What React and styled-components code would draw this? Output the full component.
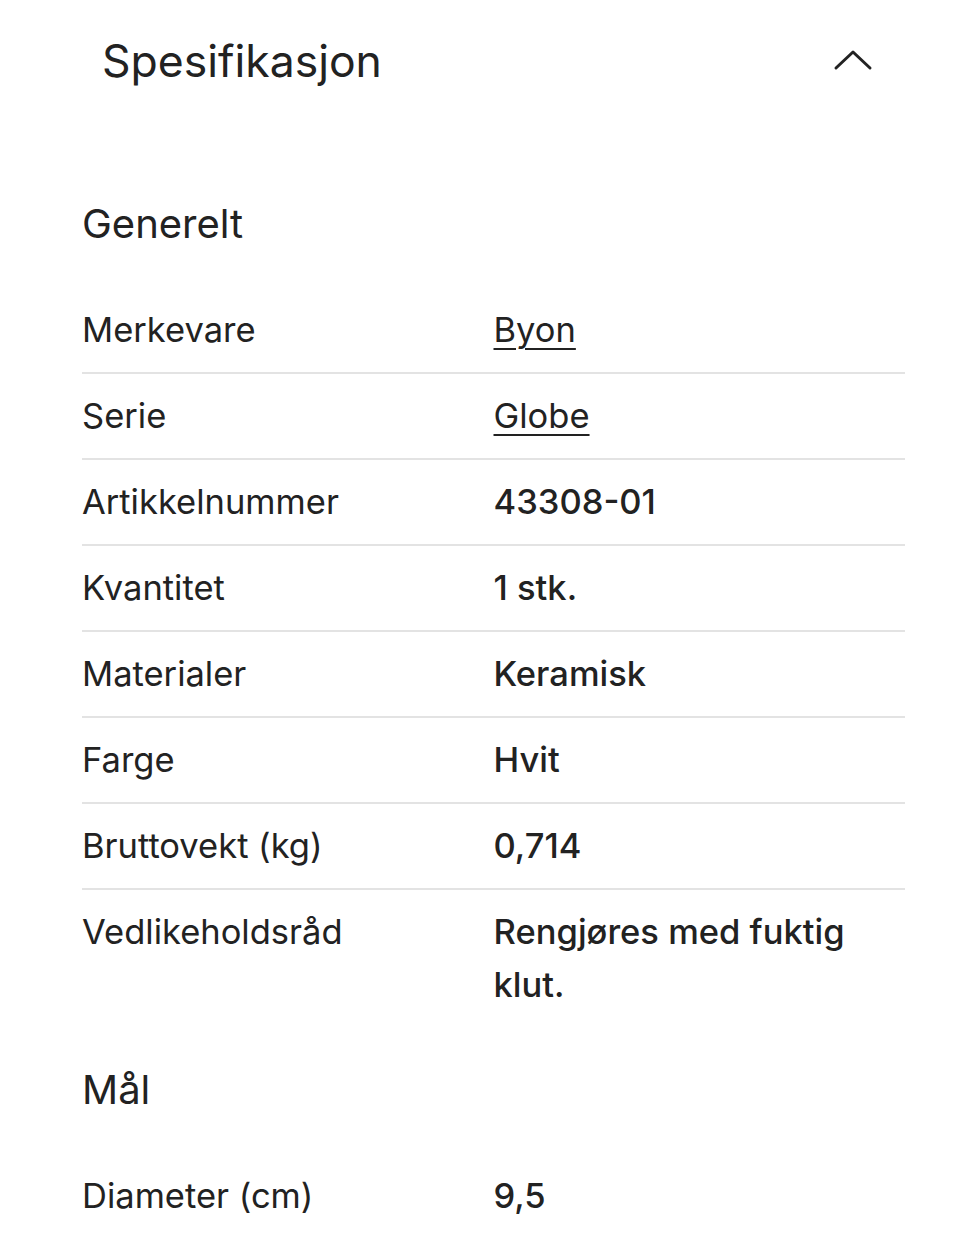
import styled, { createGlobalStyle } from "styled-components";

const GlobalStyle = createGlobalStyle`
  html, body {
    margin: 0;
    padding: 0;
    background: #ffffff;
  }
  body {
    font-family: Inter, "Noto Sans", "Liberation Sans", sans-serif;
    color: #222222;
  }
`;

const generelt = [
  { label: "Merkevare", value: "Byon", link: true },
  { label: "Serie", value: "Globe", link: true },
  { label: "Artikkelnummer", value: "43308-01" },
  { label: "Kvantitet", value: "1 stk." },
  { label: "Materialer", value: "Keramisk" },
  { label: "Farge", value: "Hvit" },
  { label: "Bruttovekt (kg)", value: "0,714" },
  { label: "Vedlikeholdsråd", value: "Rengjøres med fuktig klut." },
];

const maal = [{ label: "Diameter (cm)", value: "9,5" }];

export default function App() {
  return (
    <>
      <GlobalStyle />
      <Page>
        <Header>
          <Title>Spesifikasjon</Title>
          <Toggle aria-label="Lukk">
            <svg width="40" height="24" viewBox="0 0 40 24" fill="none">
              <path
                d="M3 20 L20 4 L37 20"
                stroke="#222"
                strokeWidth="3"
                strokeLinecap="round"
                strokeLinejoin="round"
              />
            </svg>
          </Toggle>
        </Header>

        <Section $top={74}>
          <SectionTitle>Generelt</SectionTitle>
          <Table>
            {generelt.map((row, i) => (
              <Row key={row.label} $last={i === generelt.length - 1}>
                <Label>{row.label}</Label>
                <Value>{row.link ? <ValueLink href="#">{row.value}</ValueLink> : row.value}</Value>
              </Row>
            ))}
          </Table>
        </Section>

        <Section $top={35}>
          <SectionTitle>Mål</SectionTitle>
          <Table>
            {maal.map((row, i) => (
              <Row key={row.label} $last={i === maal.length - 1}>
                <Label>{row.label}</Label>
                <Value>{row.value}</Value>
              </Row>
            ))}
          </Table>
        </Section>
      </Page>
    </>
  );
}

const Page = styled.div`
  width: 960px;
  padding: 0 55px 0 82px;
  box-sizing: border-box;
`;

const Header = styled.div`
  display: flex;
  align-items: center;
  justify-content: space-between;
  height: 122px;
  padding: 0 32px 0 20px;
`;

const Title = styled.h2`
  margin: 0;
  font-size: 44.5px;
  font-weight: 400;
  letter-spacing: 0;
`;

const Toggle = styled.button`
  display: flex;
  align-items: center;
  justify-content: center;
  padding: 0;
  border: 0;
  background: none;
  margin-bottom: 2px;
`;

const Section = styled.section`
  display: flex;
  flex-direction: column;
  padding-top: ${(p) => p.$top}px;
`;

const SectionTitle = styled.h3`
  margin: 0 0 36px;
  font-size: 40px;
  font-weight: 400;
  line-height: 56px;
`;

const Table = styled.div`
  display: flex;
  flex-direction: column;
`;

const Row = styled.div`
  display: grid;
  grid-template-columns: 1fr 1fr;
  padding: 15px 0 16px;
  border-bottom: ${(p) => (p.$last ? "0" : "2px solid #e3e3e3")};
  font-size: 34.5px;
  line-height: 53px;
`;

const Label = styled.div`
  font-weight: 400;
`;

const Value = styled.div`
  font-weight: 500;
  padding-right: 40px;
`;

const ValueLink = styled.a`
  color: inherit;
  font-weight: 400;
  text-decoration: underline;
  text-underline-offset: 6px;
  text-decoration-thickness: 2px;
`;
